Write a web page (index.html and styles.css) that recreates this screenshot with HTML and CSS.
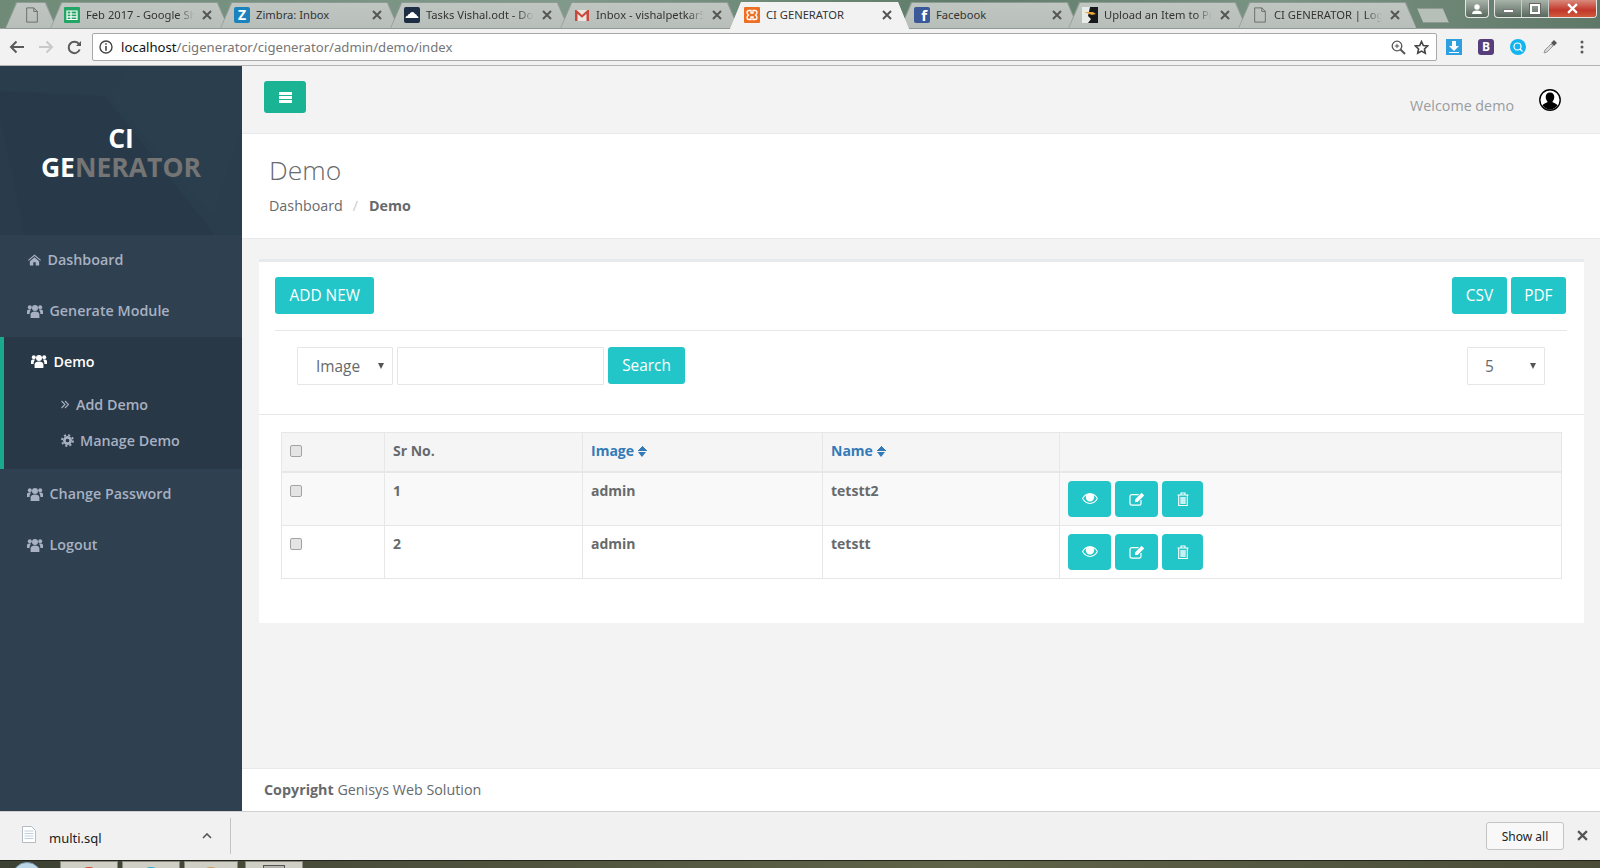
FILE: index.html
```html
<!DOCTYPE html>
<html lang="en">
<head>
    <meta charset="UTF-8">
    <title>CI GENERATOR</title>
    <link rel="stylesheet" href="styles.css">
</head>
<body>
    <svg class="defs" width="0" height="0">
        <symbol id="i-users" viewBox="0 0 16 14">
            <circle cx="8" cy="4" r="3"/><circle cx="2.8" cy="3.2" r="2"/><circle cx="13.2" cy="3.2" r="2"/>
            <path d="M3.6 14v-3.6C3.6 8.300 5.300 7.400 8 7.400s4.400.9 4.400 3V14z"/>
            <path d="M0 10V7.300C0 6.200 1 5.600 2.800 5.600c.5 0 .9.100 1.200.2-.8.900-1.400 2.200-1.400 4.200z"/>
            <path d="M16 10V7.300c0-1.100-1-1.700-2.800-1.700-.5 0-.9.100-1.200.2.800.9 1.400 2.200 1.400 4.200z"/>
        </symbol>
        <symbol id="i-home" viewBox="0 0 14 12">
            <path d="M7 0l7 6-.8.900L7 1.700.8 6.900 0 6z"/>
            <path d="M2 7.300L7 3l5 4.300V12H8.300V8.500H5.700V12H2z"/>
        </symbol>
        <symbol id="i-cog" viewBox="0 0 14 14">
            <circle cx="7" cy="7" r="3.400" fill="none" stroke="currentColor" stroke-width="2.800"/>
            <circle cx="7" cy="7" r="5.900" fill="none" stroke="currentColor" stroke-width="2" stroke-dasharray="2.300 2.330"/>
        </symbol>
        <symbol id="i-eye" viewBox="0 0 16 11">
            <path fill-rule="evenodd" d="M8 0c3.400 0 6.300 2.200 8 5.500C14.300 8.800 11.400 11 8 11S1.700 8.800 0 5.500C1.700 2.200 4.600 0 8 0zM4.600 1.900C3.200 2.600 2 3.900 1.200 5.500 2.800 8.200 5.200 9.900 8 9.900s5.200-1.700 6.800-4.400c-.8-1.600-2-2.900-3.400-3.600.5.700.8 1.500.8 2.400C12.200 6.700 10.300 8.500 8 8.500S3.800 6.700 3.800 4.300c0-.9.300-1.700.8-2.400z"/>
        </symbol>
        <symbol id="i-edit" viewBox="0 0 16 14">
            <path fill="none" stroke="currentColor" stroke-width="1.200" d="M9.500 2.600H3C1.800 2.600 1 3.400 1 4.600v6.600c0 1.100.8 1.900 2 1.900h7c1.200 0 2-.8 2-1.900V8"/>
            <path d="M6 7.400L12.600.8l2.600 2.600-6.600 6.600H6z"/>
        </symbol>
        <symbol id="i-trash" viewBox="0 0 12 14">
            <path fill="none" stroke="currentColor" stroke-width="1.100" d="M.5 3h11M4 3V1h4v2M1.700 3v10.500h8.600V3"/>
            <path opacity=".75" d="M3.300 5h5.400v7H3.300z"/>
        </symbol>
        <symbol id="i-file" viewBox="0 0 14 18">
            <path fill="none" stroke="currentColor" stroke-width="1" d="M1 1h8l4 4v12H1zM9 1v4h4"/>
        </symbol>
        <symbol id="i-close" viewBox="0 0 10 10">
            <path fill="none" stroke="currentColor" stroke-width="2" d="M1 1l8 8M9 1l-8 8"/>
        </symbol>
    </svg>

    <div class="browser-tabs">
        <div class="tab tab-small"><svg class="fav fav-file"><use href="#i-file"/></svg></div>
        <div class="tab">
            <svg class="fav" viewBox="0 0 16 16"><rect width="16" height="16" rx="1" fill="#23a566"/><path d="M3 4h10v8.500H3zM3 7h10M3 9.800h10M7 4v8.500" fill="none" stroke="#fff" stroke-width="1.200"/></svg>
            <span class="tab-title fade">Feb 2017 - Google Sheets</span>
            <svg class="tab-x"><use href="#i-close"/></svg>
        </div>
        <div class="tab">
            <span class="fav fav-letter fav-zimbra">Z</span>
            <span class="tab-title">Zimbra: Inbox</span>
            <svg class="tab-x"><use href="#i-close"/></svg>
        </div>
        <div class="tab">
            <svg class="fav" viewBox="0 0 16 16"><rect width="16" height="16" rx="2" fill="#1d2d44"/><path d="M1.500 11c0-1.500 1-2 2-2 .3-1.500 1.300-2 2-2 .6-1.300 1.700-2 2.800-2 1.300 0 2.300.8 2.700 2 1 .1 1.800.9 2 2 .8.200 1.500.8 1.500 2z" fill="#fff"/></svg>
            <span class="tab-title fade">Tasks Vishal.odt - Docs</span>
            <svg class="tab-x"><use href="#i-close"/></svg>
        </div>
        <div class="tab">
            <svg class="fav" viewBox="0 0 16 16"><path d="M1 3h14v11H1z" fill="#e8e4df"/><path d="M1 14V3h1.500L8 8l5.500-5H15v11h-2.500V6.800L8 10.800 3.500 6.800V14z" fill="#c9483c"/></svg>
            <span class="tab-title fade">Inbox - vishalpetkar5</span>
            <svg class="tab-x"><use href="#i-close"/></svg>
        </div>
        <div class="tab tab-active">
            <svg class="fav" viewBox="0 0 16 16"><rect width="16" height="16" rx="1" fill="#ee6f24"/><path d="M5 3.500h2v2.500h2V3.500h2c1.500 0 2 1 2 2 0 1.200-.8 1.800-1.500 2.500.7.700 1.500 1.300 1.500 2.500 0 1-.5 2-2 2H9V10H7v2.500H5c-1.500 0-2-1-2-2 0-1.200.8-1.800 1.500-2.500C3.800 7.300 3 6.700 3 5.500c0-1 .5-2 2-2z" fill="none" stroke="#fff" stroke-width="1.300"/></svg>
            <span class="tab-title">CI GENERATOR</span>
            <svg class="tab-x"><use href="#i-close"/></svg>
        </div>
        <div class="tab tab-tight">
            <span class="fav fav-letter fav-fb">f</span>
            <span class="tab-title">Facebook</span>
            <svg class="tab-x"><use href="#i-close"/></svg>
        </div>
        <div class="tab">
            <svg class="fav" viewBox="0 0 16 16"><rect width="16" height="16" fill="#e8ece6"/><path d="M8 0h8v16H6l3-4-3-3z" fill="#16181c"/><path d="M2 5h9l3 2-4 1z" fill="#e8a23a"/></svg>
            <span class="tab-title fade">Upload an Item to Pinterest</span>
            <svg class="tab-x"><use href="#i-close"/></svg>
        </div>
        <div class="tab">
            <svg class="fav fav-file"><use href="#i-file"/></svg>
            <span class="tab-title fade">CI GENERATOR | Login</span>
            <svg class="tab-x"><use href="#i-close"/></svg>
        </div>
        <div class="new-tab"></div>
        <div class="win-controls">
            <div class="win-user">
                <svg width="12" height="10" viewBox="0 0 12 10"><circle cx="6" cy="3" r="2.700" fill="#fff"/><path d="M1 10c0-2.500 2-3.500 5-3.500s5 1 5 3.500z" fill="#fff"/></svg>
            </div>
            <div class="win-group">
                <div class="win-btn win-min"><span></span></div>
                <div class="win-btn win-max"><span></span></div>
                <div class="win-btn win-close"><svg width="13" height="11"><use href="#i-close"/></svg></div>
            </div>
        </div>
    </div>

    <div class="browser-bar">
        <svg class="nav-icon" width="16" height="14" viewBox="0 0 16 14"><path d="M15 7H2M7.500 1.500L2 7l5.500 5.500" fill="none" stroke="#5a5a5a" stroke-width="2"/></svg>
        <svg class="nav-icon" width="16" height="14" viewBox="0 0 16 14"><path d="M1 7h13M8.500 1.500L14 7l-5.500 5.500" fill="none" stroke="#c9c9c9" stroke-width="2"/></svg>
        <svg class="nav-icon" width="15" height="15" viewBox="0 0 15 15"><path d="M12.700 9.500a5.700 5.700 0 1 1-.6-5.300" fill="none" stroke="#5a5a5a" stroke-width="2"/><path d="M14 1v5H9z" fill="#5a5a5a"/></svg>
        <div class="url-box">
            <svg width="14" height="14" viewBox="0 0 14 14"><circle cx="7" cy="7" r="6" fill="none" stroke="#444" stroke-width="1.400"/><path d="M6.200 3.200h1.600v1.600H6.200zM6.200 6h1.600v4.800H6.200z" fill="#444"/></svg>
            <div class="url-text"><b>localhost</b>/cigenerator/cigenerator/admin/demo/index</div>
            <svg width="15" height="15" viewBox="0 0 15 15"><circle cx="6" cy="6" r="4.800" fill="none" stroke="#555" stroke-width="1.300"/><path d="M9.500 9.500L14 14" stroke="#555" stroke-width="2"/><path d="M3.800 6h4.400M6 3.800v4.400" stroke="#555"/></svg>
            <svg width="15" height="15" viewBox="0 0 24 24"><path d="M12 2.500l2.900 6.300 6.800.8-5 4.700 1.300 6.800-6-3.400-6 3.400 1.300-6.800-5-4.700 6.800-.8z" fill="none" stroke="#444" stroke-width="2.600"/></svg>
        </div>
        <div class="ext-icons">
            <svg width="16" height="16" viewBox="0 0 16 16"><rect width="16" height="16" fill="#2f9fe0"/><path d="M6 2h4v5h3l-5 5-5-5h3zM3 13h10v1H3z" fill="#fff"/></svg>
            <span class="ext-b">B</span>
            <svg width="16" height="16" viewBox="0 0 16 16"><circle cx="8" cy="8" r="8" fill="#12b5f0"/><circle cx="7.500" cy="7.500" r="3.500" fill="none" stroke="#fff" stroke-width="1.200"/><path d="M10 10l2.500 2.500" stroke="#fff" stroke-width="1.200"/></svg>
            <svg width="16" height="16" viewBox="0 0 16 16"><path d="M2 14l1-3 6-6 2 2-6 6z" fill="#d8d8d8" stroke="#999"/><path d="M9 4l3-3 3 3-3 3z" fill="#555"/></svg>
        </div>
        <svg class="menu-dots" width="4" height="14" viewBox="0 0 4 14"><circle cx="2" cy="2" r="1.500"/><circle cx="2" cy="7" r="1.500"/><circle cx="2" cy="12" r="1.500"/></svg>
    </div>

    <div class="app">
        <div class="sidebar">
            <div class="logo-box">
                <svg class="logo-shapes" viewBox="0 0 242 169" preserveAspectRatio="none">
                    <path d="M0 25L105 30 215 169H0z" fill="#283a49"/>
                    <path d="M110 30L130 0h112v60l-30 90z" fill="#2b3e4d"/>
                    <path d="M0 50L25 169H0z" fill="#2a3c4b"/>
                </svg>
                <div class="logo-text">CI<br>GE<span class="logo-grey">NERATOR</span></div>
            </div>
            <div class="nav-item nav-dash"><svg class="ic-home"><use href="#i-home"/></svg>Dashboard</div>
            <div class="nav-item"><svg class="ic-users"><use href="#i-users"/></svg>Generate Module</div>
            <div class="nav-open">
                <div class="nav-item nav-current"><svg class="ic-users"><use href="#i-users"/></svg>Demo</div>
                <div class="nav-sub">
                    <svg width="8" height="9" viewBox="0 0 8 9"><path d="M.5 1L4 4.500.5 8M4 1l3.500 3.500L4 8" fill="none" stroke="currentColor" stroke-width="1.100"/></svg>
                    Add Demo
                </div>
                <div class="nav-sub nav-sub-cog"><svg class="ic-cog"><use href="#i-cog"/></svg>Manage Demo</div>
            </div>
            <div class="nav-item"><svg class="ic-users"><use href="#i-users"/></svg>Change Password</div>
            <div class="nav-item"><svg class="ic-users"><use href="#i-users"/></svg>Logout</div>
        </div>

        <div class="main">
            <div class="topbar">
                <button class="burger"><span></span><span></span><span></span></button>
                <div class="welcome">Welcome demo</div>
                <svg class="avatar" width="22" height="22" viewBox="0 0 22 22">
                    <circle cx="11" cy="11" r="10.200" fill="#fff" stroke="#000" stroke-width="1.400"/>
                    <path d="M11 3.500c2.800 0 4.300 2 4.300 4.500 0 1.800-.8 3.300-1.700 4.200v1.100c1.500.8 3.800 1.400 5 2.900-1.600 2.300-4.700 4.300-7.600 4.300s-6-2-7.600-4.300c1.200-1.500 3.500-2.100 5-2.900v-1.100C7.500 11.300 6.700 9.800 6.700 8c0-2.500 1.500-4.500 4.300-4.500z"/>
                </svg>
            </div>
            <div class="page-head">
                <h2>Demo</h2>
                <div class="crumbs"><span>Dashboard</span><span class="crumb-sep">/</span><b>Demo</b></div>
            </div>
            <div class="content">
                <div class="card">
                    <div class="card-top">
                        <button class="btn btn-add">ADD NEW</button>
                        <div class="export">
                            <button class="btn">CSV</button>
                            <button class="btn">PDF</button>
                        </div>
                    </div>
                    <div class="search-row">
                        <div class="select-wrap sel-field"><select><option>Image</option></select></div>
                        <input type="text" class="search-input">
                        <button class="btn btn-search">Search</button>
                        <div class="select-wrap sel-count"><select><option>5</option></select></div>
                    </div>
                    <div class="table-wrap">
                        <table>
                            <colgroup>
                                <col class="c-check"><col class="c-sr"><col class="c-image"><col class="c-name"><col>
                            </colgroup>
                            <thead>
                                <tr>
                                    <th><input type="checkbox"></th>
                                    <th>Sr No.</th>
                                    <th><a class="sort">Image <i class="sort-ic"></i></a></th>
                                    <th><a class="sort">Name <i class="sort-ic"></i></a></th>
                                    <th></th>
                                </tr>
                            </thead>
                            <tbody>
                                <tr class="odd">
                                    <td><input type="checkbox"></td>
                                    <td>1</td>
                                    <td>admin</td>
                                    <td>tetstt2</td>
                                    <td>
                                        <div class="actions">
                                            <button class="act act-view"><svg class="ic-eye"><use href="#i-eye"/></svg></button>
                                            <button class="act act-edit"><svg class="ic-edit"><use href="#i-edit"/></svg></button>
                                            <button class="act act-del"><svg class="ic-trash"><use href="#i-trash"/></svg></button>
                                        </div>
                                    </td>
                                </tr>
                                <tr>
                                    <td><input type="checkbox"></td>
                                    <td>2</td>
                                    <td>admin</td>
                                    <td>tetstt</td>
                                    <td>
                                        <div class="actions">
                                            <button class="act act-view"><svg class="ic-eye"><use href="#i-eye"/></svg></button>
                                            <button class="act act-edit"><svg class="ic-edit"><use href="#i-edit"/></svg></button>
                                            <button class="act act-del"><svg class="ic-trash"><use href="#i-trash"/></svg></button>
                                        </div>
                                    </td>
                                </tr>
                            </tbody>
                        </table>
                    </div>
                </div>
            </div>
            <div class="footer"><b>Copyright</b> Genisys Web Solution</div>
        </div>
    </div>

    <div class="download-bar">
        <div class="dl-item">
            <svg class="dl-file" width="14" height="17" viewBox="0 0 14 17"><path d="M.5.500h9l4 4v12H.5z" fill="#fff" stroke="#b3bbc3"/><path d="M2.500 5h9M2.500 7.500h9M2.500 10h9M2.500 12.500h9" stroke="#c0d0e0"/></svg>
            <span class="dl-name">multi.sql</span>
            <svg class="dl-caret" width="10" height="6" viewBox="0 0 10 6"><path d="M1 5l4-4 4 4" fill="none" stroke="#555" stroke-width="1.600"/></svg>
        </div>
        <button class="show-all">Show all</button>
        <svg class="dl-x"><use href="#i-close"/></svg>
    </div>

    <div class="taskbar">
        <div class="orb"></div>
        <div class="task-btn task-first"><i class="task-dot dot-red"></i></div>
        <div class="task-btn"><i class="task-dot dot-blue"></i></div>
        <div class="task-btn task-short"><i class="task-dot dot-orange"></i></div>
        <div class="task-btn task-gap"><i class="task-box"></i></div>
    </div>
</body>
</html>
```

FILE: styles.css
```css
* {
    box-sizing: border-box;
}
html, body {
    margin: 0;
    height: 868px;
    overflow: hidden;
}
body {
    display: flex;
    flex-direction: column;
    font-family: "Open Sans", "Noto Sans", sans-serif;
    font-size: 14.3px;
    color: #676a6c;
    background: #f3f3f4;
}
.defs {
    position: absolute;
}
button {
    font-family: inherit;
    cursor: pointer;
}

/* browser tabs */
.browser-tabs {
    height: 29px;
    flex: none;
    display: flex;
    align-items: flex-end;
    padding-left: 5px;
    background: linear-gradient(90deg, #6f8b78, #80998a 35%, #5f7b69 60%, #7a9484 80%, #5f7766);
    border-bottom: 1px solid #9b9f9c;
}
.tab {
    position: relative;
    width: 179px;
    height: 27px;
    margin-right: -9px;
    margin-bottom: -1px;
    padding: 0 0 2px 14px;
    display: flex;
    align-items: center;
    gap: 6px;
    flex: none;
    font-family: "Noto Sans", "Open Sans", sans-serif;
    font-size: 11.2px;
    color: #333;
    background: #8e9a92;
    clip-path: polygon(0 100%, 11px 0, calc(100% - 11px) 0, 100% 100%);
}
.tab::before {
    content: "";
    position: absolute;
    inset: 1px;
    background: linear-gradient(#bfc5c0, #b8bfba);
    clip-path: polygon(0 100%, 11px 0, calc(100% - 11px) 0, 100% 100%);
}
.tab > * {
    position: relative;
}
.tab-small {
    width: 52px;
    margin-right: -7px;
    padding-left: 19px;
}
.tab-active {
    z-index: 2;
    background: #f2f2f2;
}
.tab-active::before {
    inset: 0;
    background: #f2f2f2;
}
.tab-tight {
    margin-right: -11px;
}
.fav {
    width: 16px;
    height: 16px;
    flex: none;
}
.fav-file {
    color: #666;
}
.fav-letter {
    color: #fff;
    font-weight: 700;
    text-align: center;
    line-height: 16px;
    border-radius: 2px;
}
.fav-zimbra {
    background: #1a83bd;
    font-size: 14px;
}
.fav-fb {
    background: #3b5998;
    font-size: 15px;
    text-align: right;
    padding-right: 3px;
}
.tab-title {
    width: 108px;
    white-space: nowrap;
    overflow: hidden;
}
.tab-title.fade {
    mask-image: linear-gradient(90deg, #000 85%, transparent);
}
.tab-x {
    width: 10px;
    height: 10px;
    margin-left: 2px;
    color: #555;
}
.new-tab {
    width: 32px;
    height: 15px;
    margin: 0 0 5px 9px;
    background: #b7bfb9;
    border: 1px solid #8e9a92;
    clip-path: polygon(0 0, 80% 0, 100% 100%, 20% 100%);
    flex: none;
}
.win-controls {
    margin-left: auto;
    margin-right: 3px;
    align-self: flex-start;
    display: flex;
    gap: 5px;
}
.win-user, .win-group {
    height: 18px;
    border: 1px solid #e6e6e6;
    border-top: 0;
    border-radius: 0 0 4px 4px;
    background: linear-gradient(#a8b3aa, #58685c);
}
.win-user {
    width: 24px;
    display: flex;
    align-items: center;
    justify-content: center;
}
.win-group {
    display: flex;
    overflow: hidden;
}
.win-btn {
    display: flex;
    align-items: center;
    justify-content: center;
    width: 27px;
    border-right: 1px solid #c5cbc6;
}
.win-min span {
    width: 11px;
    height: 4px;
    margin-top: 4px;
    background: #fff;
    border: 1px solid #777;
}
.win-max span {
    width: 10px;
    height: 10px;
    border: 2px solid #fff;
    outline: 1px solid #666;
}
.win-close {
    width: 47px;
    border-right: 0;
    color: #fff;
    background: linear-gradient(#d98a7c, #c2372a 60%, #cf5a3c);
}

/* address bar */
.browser-bar {
    height: 37px;
    flex: none;
    display: flex;
    align-items: center;
    padding: 0 14px 0 9px;
    background: #f2f2f2;
    border-bottom: 1px solid #b4b4b4;
}
.nav-icon {
    margin-right: 13px;
    flex: none;
}
.nav-icon:nth-child(3) {
    margin-right: 10px;
}
.url-box {
    width: 1345px;
    height: 28px;
    display: flex;
    align-items: center;
    gap: 8px;
    padding: 0 7px 0 6px;
    background: #fff;
    border: 1px solid #a9a9a9;
    border-radius: 2px;
}
.url-text {
    flex: 1;
    font-family: "Noto Sans", sans-serif;
    font-size: 13.15px;
    color: #767676;
}
.url-text b {
    font-weight: 400;
    color: #111;
}
.ext-icons {
    display: flex;
    align-items: center;
    gap: 16px;
    margin-left: 9px;
}
.ext-b {
    width: 16px;
    height: 16px;
    background: #563d7c;
    border-radius: 3px;
    color: #fff;
    font-size: 12px;
    font-weight: 700;
    text-align: center;
    line-height: 16px;
}
.menu-dots {
    margin-left: 22px;
    fill: #5a5a5a;
}

/* app */
.app {
    flex: 1;
    min-height: 0;
    display: flex;
}
.sidebar {
    width: 242px;
    flex: none;
    background: #2f4050;
    color: #a7b1c2;
    font-weight: 600;
}
.logo-box {
    position: relative;
    height: 169px;
    display: flex;
    align-items: center;
    justify-content: center;
    background: #2a3d4d;
    overflow: hidden;
}
.logo-shapes {
    position: absolute;
    inset: 0;
    width: 100%;
    height: 100%;
}
.logo-text {
    position: relative;
    text-align: center;
    color: #fff;
    font-size: 26.5px;
    font-weight: 700;
    line-height: 29px;
    margin-top: 5px;
}
.logo-grey {
    color: #757575;
}
.nav-item {
    height: 51px;
    display: flex;
    align-items: center;
    gap: 6.500px;
    padding: 0 0 2px 27px;
}
.nav-dash {
    padding-left: 28px;
}
.nav-item svg, .nav-sub svg {
    fill: currentColor;
    flex: none;
}
.ic-home {
    width: 13px;
    height: 12px;
}
.ic-users {
    width: 16px;
    height: 14px;
}
.ic-cog {
    width: 13px;
    height: 13px;
}
.nav-open {
    height: 132px;
    background: #293846;
    border-left: 4px solid #19aa8d;
}
.nav-current {
    padding: 0 0 1px 27px;
    color: #fff;
    height: 49px;
}
.nav-sub {
    height: 36px;
    display: flex;
    align-items: center;
    gap: 7px;
    padding-left: 57px;
}
.nav-sub-cog {
    gap: 6px;
}

.main {
    flex: 1;
    min-width: 0;
    display: flex;
    flex-direction: column;
}
.topbar {
    height: 68px;
    flex: none;
    display: flex;
    align-items: flex-start;
    padding: 15px 39px 0 22px;
    border-bottom: 1px solid #e7eaec;
}
.burger {
    width: 42px;
    height: 32px;
    display: flex;
    flex-direction: column;
    align-items: center;
    justify-content: center;
    gap: 1px;
    padding: 0;
    border: 0;
    border-radius: 3px;
    background: #1ab394;
}
.burger span {
    width: 13px;
    height: 3px;
    background: #fff;
}
.welcome {
    margin-left: auto;
    margin-top: 15px;
    color: #999c9e;
}
.avatar {
    margin-left: 25px;
    margin-top: 8px;
}
.page-head {
    height: 105px;
    flex: none;
    padding: 19px 0 0 27px;
    background: #fff;
    border-bottom: 1px solid #e7eaec;
}
.page-head h2 {
    margin: 0 0 9px;
    font-size: 26.5px;
    font-weight: 300;
    line-height: 34px;
}
.crumbs {
    display: flex;
    line-height: 20px;
}
.crumb-sep {
    padding: 0 11px 0 10px;
    color: #ccc;
}
.content {
    flex: 1;
    min-height: 0;
    padding: 20px 16px 0 17px;
}
.card {
    height: 364px;
    background: #fff;
    border-top: 3px solid #e7eaec;
}
.card-top {
    margin: 0 17px 0 16px;
    padding: 15px 0 16px;
    display: flex;
    justify-content: space-between;
    border-bottom: 1px solid #e7e7e7;
}
.export {
    display: flex;
    gap: 4px;
    margin-right: 1px;
}
.btn {
    height: 37px;
    padding: 0 13.500px;
    border: 0;
    border-radius: 3px;
    background: #23c6c8;
    color: #fff;
    font-size: 15.4px;
}
.btn-add {
    padding: 0 14.500px;
}
.search-row {
    height: 84px;
    padding: 16px 39px 0 38px;
    display: flex;
    align-items: flex-start;
    gap: 4px;
    border-bottom: 1px solid #e7e7e7;
}
.select-wrap {
    position: relative;
    height: 38px;
}
.select-wrap::after {
    content: "";
    position: absolute;
    right: 9px;
    top: 16px;
    border: 3.500px solid transparent;
    border-top: 6px solid #555;
    border-bottom: 0;
}
.select-wrap select {
    width: 100%;
    height: 100%;
    padding-left: 18px;
    appearance: none;
    background: #fff;
    border: 1px solid #e5e6e7;
    border-radius: 1px;
    color: #676a6c;
    font-family: inherit;
    font-size: 15.4px;
}
.sel-field {
    width: 96px;
}
.sel-count {
    width: 78px;
    margin-left: auto;
}
.sel-count select {
    padding-left: 17px;
}
.search-input {
    width: 207px;
    height: 38px;
    border: 1px solid #e5e6e7;
    border-radius: 1px;
}
.btn-search {
    width: 77px;
    padding: 0;
}
.table-wrap {
    padding: 17px 22px 0;
}
table {
    width: 100%;
    table-layout: fixed;
    border-collapse: collapse;
    font-size: 14px;
    font-weight: 700;
}
.c-check {
    width: 103px;
}
.c-sr {
    width: 198px;
}
.c-image {
    width: 240px;
}
.c-name {
    width: 237px;
}
th, td {
    border: 1px solid #e7e7e7;
    padding: 8px;
    text-align: left;
    vertical-align: top;
    line-height: 20px;
}
th {
    height: 39px;
    background: #f5f5f6;
}
thead th {
    border-bottom-width: 2px;
}
.odd td {
    background: #f9f9f9;
}
input[type="checkbox"] {
    appearance: none;
    display: block;
    width: 12px;
    height: 12px;
    margin: 4px 0 0;
    background: #e4e4e4;
    border: 1px solid #a3a3a3;
    border-radius: 2px;
}
.sort {
    color: #337ab7;
}
.sort-ic {
    display: inline-block;
    width: 9px;
    height: 11px;
    vertical-align: -1px;
    background:
        conic-gradient(from 135deg at 50% 0, transparent 0, #337ab7 0 90deg, transparent 90deg) 0 0 / 9px 5px no-repeat;
    position: relative;
}
.sort-ic::after {
    content: "";
    position: absolute;
    left: 0;
    bottom: 0;
    border: 4.500px solid transparent;
    border-top: 5px solid #337ab7;
    border-bottom: 0;
}
.actions {
    display: flex;
    gap: 4px;
}
.act {
    height: 36px;
    padding: 0;
    border: 0;
    border-radius: 4px;
    background: #23c6c8;
    color: #fff;
    display: flex;
    align-items: center;
    justify-content: center;
}
.act svg {
    fill: currentColor;
}
.act-view {
    width: 43px;
}
.act-edit {
    width: 43px;
}
.act-del {
    width: 41px;
}
.ic-eye {
    width: 16px;
    height: 11px;
}
.ic-edit {
    width: 16px;
    height: 14px;
}
.ic-trash {
    width: 12px;
    height: 14px;
}
.footer {
    height: 43px;
    flex: none;
    padding: 11px 0 0 22px;
    background: #fff;
    border-top: 1px solid #e7eaec;
}

/* download shelf */
.download-bar {
    height: 49px;
    flex: none;
    display: flex;
    align-items: center;
    padding-right: 12px;
    background: #f1f1f1;
    border-top: 1px solid #d0d0d0;
}
.dl-item {
    width: 231px;
    height: 36px;
    display: flex;
    align-items: center;
    padding-left: 22px;
    border-right: 1px solid #c4c4c4;
}
.dl-file {
    margin-top: -3px;
}
.dl-name {
    margin-left: 13px;
    margin-top: 4px;
    font-family: "Noto Sans", sans-serif;
    font-size: 13px;
    color: #222;
}
.dl-caret {
    margin-left: auto;
    margin-right: 18px;
}
.show-all {
    margin-left: auto;
    width: 78px;
    height: 28px;
    padding: 0;
    background: #f8f8f8;
    border: 1px solid #c4c4c4;
    border-radius: 3px;
    font-family: "Noto Sans", sans-serif;
    font-size: 12px;
    color: #222;
}
.dl-x {
    width: 11px;
    height: 11px;
    margin: -2px 0 0 13px;
    color: #555;
}

/* windows taskbar */
.taskbar {
    height: 8px;
    flex: none;
    display: flex;
    align-items: flex-start;
    overflow: hidden;
    padding-left: 12px;
    background: linear-gradient(90deg, #3d4133, #5f6347 60%, #4a4c38);
    border-top: 1px solid #23251c;
}
.orb {
    width: 30px;
    height: 30px;
    flex: none;
    margin-top: 1px;
    border-radius: 50%;
    background: #bcd6e8;
    border: 1px solid #7d9db3;
}
.task-btn {
    width: 58px;
    height: 8px;
    flex: none;
    margin-left: 4px;
    display: flex;
    justify-content: center;
    background: #cfcfc6;
    border: 1px solid #8b8b80;
    border-bottom: 0;
}
.task-first {
    margin-left: 18px;
}
.task-short {
    width: 54px;
}
.task-gap {
    margin-left: 7px;
}
.task-dot {
    width: 22px;
    height: 22px;
    margin-top: 5px;
    border-radius: 50%;
}
.dot-red {
    background: #d8402f;
}
.dot-blue {
    background: #28a8e4;
}
.dot-orange {
    background: #c99a5a;
}
.task-box {
    width: 22px;
    height: 10px;
    margin-top: 3px;
    background: #b5b5ae;
    border: 1px solid #555;
}
```
